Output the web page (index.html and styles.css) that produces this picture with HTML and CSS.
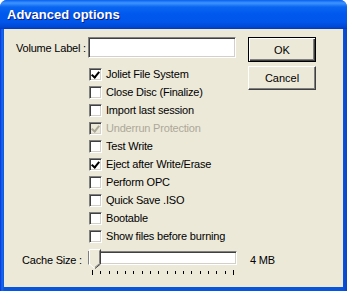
FILE: index.html
```html
<!DOCTYPE html>
<html lang="en">
<head>
    <meta charset="UTF-8">
    <title>Advanced options</title>
    <link rel="stylesheet" href="styles.css">
</head>
<body>
    <div class="window">
        <div class="titlebar">Advanced options</div>
        <div class="content">
            <div class="main">
                <div class="volume-row">
                    <label class="volume-label" for="volume">Volume Label :</label>
                    <input class="textbox" id="volume" type="text">
                </div>
                <div class="checks">
                    <div class="check"><span class="box checked"></span>Joliet File System</div>
                    <div class="check"><span class="box"></span>Close Disc (Finalize)</div>
                    <div class="check"><span class="box"></span>Import last session</div>
                    <div class="check disabled"><span class="box checked"></span>Underrun Protection</div>
                    <div class="check"><span class="box"></span>Test Write</div>
                    <div class="check"><span class="box checked"></span>Eject after Write/Erase</div>
                    <div class="check"><span class="box"></span>Perform OPC</div>
                    <div class="check"><span class="box"></span>Quick Save .ISO</div>
                    <div class="check"><span class="box"></span>Bootable</div>
                    <div class="check"><span class="box"></span>Show files before burning</div>
                </div>
                <div class="cache-row">
                    <span class="cache-label">Cache Size :</span>
                    <div class="slider">
                        <div class="track"></div>
                        <svg class="thumb" width="12" height="20" viewBox="0 0 12 20">
                            <polygon points="0.5,0.5 11.5,0.5 11.5,15 6,19.5 0.5,15" fill="#ece9d8"/>
                            <polyline points="0.5,15 0.5,0.5 11,0.5" fill="none" stroke="#ffffff"/>
                            <polyline points="11.5,0.5 11.5,15 6,19.5" fill="none" stroke="#404040"/>
                            <polyline points="10.5,1.5 10.5,14.6 6,18.3" fill="none" stroke="#808080"/>
                            <line x1="0.5" y1="15" x2="5" y2="19" stroke="#ffffff"/>
                        </svg>
                        <svg class="ticks" width="150" height="6" viewBox="0 0 150 6" shape-rendering="crispEdges">
                            <g stroke="#000">
                                <line x1="4.5" y1="0" x2="4.5" y2="5"/>
                                <line x1="12.5" y1="1" x2="12.5" y2="4"/>
                                <line x1="21.5" y1="1" x2="21.5" y2="4"/>
                                <line x1="29.5" y1="1" x2="29.5" y2="4"/>
                                <line x1="37.5" y1="1" x2="37.5" y2="4"/>
                                <line x1="45.5" y1="1" x2="45.5" y2="4"/>
                                <line x1="54.5" y1="1" x2="54.5" y2="4"/>
                                <line x1="62.5" y1="1" x2="62.5" y2="4"/>
                                <line x1="70.5" y1="1" x2="70.5" y2="4"/>
                                <line x1="79.5" y1="1" x2="79.5" y2="4"/>
                                <line x1="87.5" y1="1" x2="87.5" y2="4"/>
                                <line x1="95.5" y1="1" x2="95.5" y2="4"/>
                                <line x1="103.5" y1="1" x2="103.5" y2="4"/>
                                <line x1="112.5" y1="1" x2="112.5" y2="4"/>
                                <line x1="120.5" y1="1" x2="120.5" y2="4"/>
                                <line x1="128.5" y1="1" x2="128.5" y2="4"/>
                                <line x1="137.5" y1="1" x2="137.5" y2="4"/>
                                <line x1="145.5" y1="0" x2="145.5" y2="5"/>
                            </g>
                        </svg>
                    </div>
                    <span class="cache-value">4 MB</span>
                </div>
            </div>
            <div class="buttons">
                <button class="btn default">OK</button>
                <button class="btn">Cancel</button>
            </div>
        </div>
    </div>
</body>
</html>
```

FILE: styles.css
```css
html, body {
    margin: 0;
    padding: 0;
    background: #ffffff;
}

.window {
    width: 347px;
    height: 291px;
    box-sizing: border-box;
    display: flex;
    flex-direction: column;
    background: linear-gradient(to right, #0831d9, #166aee 2px, #0855dd 4px, #0855dd calc(100% - 4px), #0a44c8);
    border-radius: 7px 7px 0 0;
    padding: 0 4px 4px 4px;
    font-family: "Liberation Sans", Arial, sans-serif;
    font-size: 11px;
    color: #000000;
}

.titlebar {
    height: 29px;
    margin: 0 -4px;
    padding-left: 7px;
    display: flex;
    align-items: center;
    border-radius: 7px 7px 0 0;
    background: linear-gradient(to bottom, #0a5fee 0, #3d95ff 3px, #0a66f0 7px, #0058ee 14px, #0056ea 22px, #0047d4 27px, #0039c2 29px);
    color: #ffffff;
    font-weight: bold;
    font-size: 13px;
    text-shadow: 1px 1px 0 #0a1e8c;
    padding-bottom: 1px;
    box-sizing: border-box;
    flex-shrink: 0;
}

.content {
    flex: 1;
    display: flex;
    background: #ece9d8;
    padding: 8px 0 0 12px;
    white-space: nowrap;
    letter-spacing: -0.2px;
}

.main {
    width: 220px;
    flex-shrink: 0;
    display: flex;
    flex-direction: column;
}

.volume-row {
    display: flex;
    align-items: center;
    height: 21px;
}

.volume-label {
    width: 72px;
    flex-shrink: 0;
}

.textbox {
    width: 148px;
    height: 21px;
    flex-shrink: 0;
    box-sizing: border-box;
    margin: 0;
    padding: 0 2px;
    background: #ffffff;
    border-style: solid;
    border-width: 1px;
    border-color: #808080 #ffffff #ffffff #808080;
    box-shadow: inset 1px 1px 0 #404040, inset -1px -1px 0 #d4d0c8;
    outline: none;
}

.checks {
    margin: 7px 0 0 73px;
    display: flex;
    flex-direction: column;
}

.check {
    height: 18px;
    display: flex;
    align-items: center;
}

.box {
    width: 13px;
    height: 13px;
    flex-shrink: 0;
    box-sizing: border-box;
    margin-right: 4px;
    background: #ffffff;
    border-style: solid;
    border-width: 1px;
    border-color: #808080 #ffffff #ffffff #808080;
    box-shadow: inset 1px 1px 0 #404040, inset -1px -1px 0 #d4d0c8;
    position: relative;
}

.box.checked::after {
    content: "";
    position: absolute;
    left: 3px;
    top: 1px;
    width: 3px;
    height: 6px;
    border-style: solid;
    border-color: #000000;
    border-width: 0 2px 2px 0;
    transform: rotate(40deg);
}

.disabled {
    color: #aca899;
}

.disabled .box {
    background: #ece9d8;
}

.disabled .box.checked::after {
    border-color: #aca899;
}

.cache-row {
    display: flex;
    align-items: flex-start;
    margin-top: 4px;
    padding-left: 6px;
}

.cache-label {
    width: 66px;
    flex-shrink: 0;
    margin-top: 5px;
}

.slider {
    width: 150px;
    height: 26px;
    flex-shrink: 0;
    position: relative;
}

.track {
    position: absolute;
    left: 0;
    top: 2px;
    width: 149px;
    height: 14px;
    box-sizing: border-box;
    background: #ffffff;
    border-style: solid;
    border-width: 1px;
    border-color: #808080 #ffffff #ffffff #808080;
    box-shadow: inset 1px 1px 0 #404040, inset -1px -1px 0 #d4d0c8;
}

.thumb {
    position: absolute;
    left: 1px;
    top: 0;
}

.ticks {
    position: absolute;
    left: 0;
    top: 21px;
}

.cache-value {
    flex-shrink: 0;
    margin: 5px 0 0 12px;
}

.buttons {
    margin-left: 12px;
    flex-shrink: 0;
    display: flex;
    flex-direction: column;
    gap: 4px;
}

.btn {
    width: 68px;
    height: 24px;
    margin: 0;
    padding: 0;
    font-family: "Liberation Sans", Arial, sans-serif;
    font-size: 11px;
    color: #000000;
    background: #ece9d8;
    border-style: solid;
    border-width: 1px;
    border-color: #ffffff #404040 #404040 #ffffff;
    box-shadow: inset -1px -1px 0 #808080;
}

.btn.default {
    height: 25px;
    border: 1px solid #000000;
    box-shadow: inset 1px 1px 0 #ffffff, inset -1px -1px 0 #404040, inset -2px -2px 0 #808080;
}
```
